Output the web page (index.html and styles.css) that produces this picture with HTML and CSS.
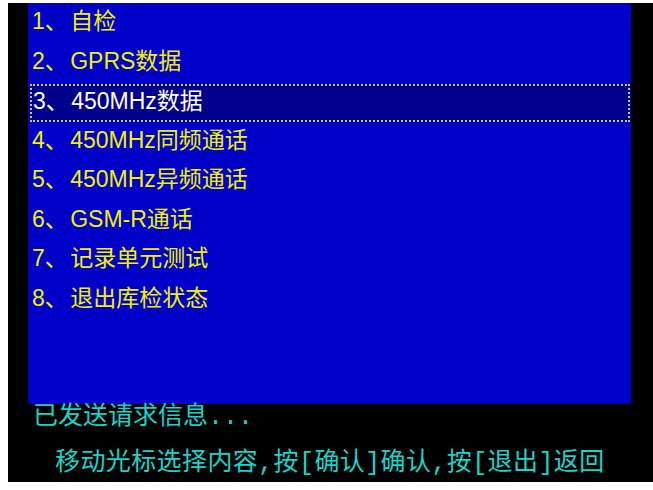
FILE: index.html
```html
<!DOCTYPE html>
<html lang="zh">
<head>
<meta charset="utf-8">
<title>库检菜单</title>
<link rel="stylesheet" href="styles.css">
</head>
<body>
<div class="screen">
  <div class="panel">
    <ul class="menu">
      <li class="item">1、 自检</li>
      <li class="item">2、 GPRS数据</li>
      <li class="item selected">3、 450MHz数据</li>
      <li class="item">4、 450MHz同频通话</li>
      <li class="item">5、 450MHz异频通话</li>
      <li class="item">6、 GSM-R通话</li>
      <li class="item">7、 记录单元测试</li>
      <li class="item">8、 退出库检状态</li>
    </ul>
  </div>
  <div class="status">已发送请求信息...</div>
  <div class="hint">移动光标选择内容,按[确认]确认,按[退出]返回</div>
</div>
</body>
</html>
```
FILE: styles.css
```css
html, body {
  margin: 0;
  padding: 0;
  background: #ffffff;
}

.screen {
  margin: 3px 0 0 8px;
  width: 645px;
  height: 479px;
  background: #000000;
  display: flex;
  flex-direction: column;
  overflow: hidden;
}

.panel {
  margin-left: 20px;
  width: 603px;
  height: 401px;
  background: #0000c8;
  flex: none;
}

.menu {
  list-style: none;
  margin: 0;
  padding: 0;
}

.item {
  height: 39.5px;
  line-height: 36px;
  padding-left: 4px;
  font-family: "Liberation Sans", "Noto Sans CJK SC", sans-serif;
  font-size: 23px;
  word-spacing: -4px;
  color: #f2f200;
  white-space: pre;
  box-sizing: border-box;
}

.item.selected {
  background: #00008c;
  color: #ffffff;
  border: 2px dotted #c8c878;
  margin: 2px 1px 0 2px;
  height: 37.5px;
  padding-left: 1px;
  line-height: 31px;
}

.status {
  margin: 2px 0 0 25px;
  height: 24px;
  line-height: 24px;
  font-family: "Liberation Mono", "Noto Sans CJK SC", monospace;
  font-size: 25px;
  color: #18d4cc;
  white-space: pre;
}

.hint {
  margin: 22px 0 0 47px;
  height: 24px;
  line-height: 24px;
  font-family: "Liberation Mono", "Noto Sans CJK SC", monospace;
  font-size: 25px;
  letter-spacing: 0.4px;
  color: #18d4cc;
  white-space: pre;
}
```
